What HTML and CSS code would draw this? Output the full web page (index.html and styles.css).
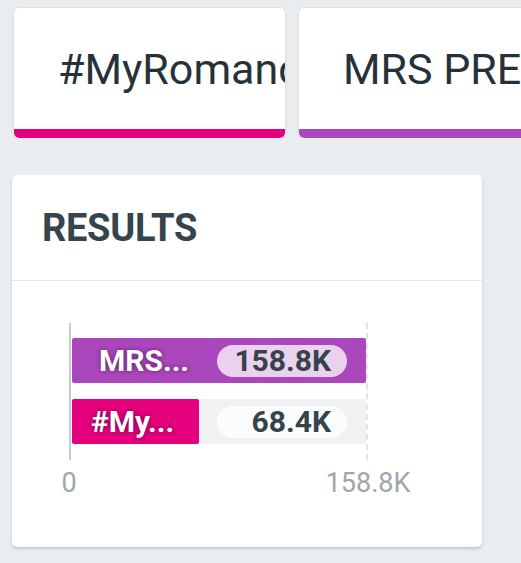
FILE: index.html
```html
<!DOCTYPE html>
<html lang="en">
<head>
<meta charset="utf-8">
<title>Results</title>
<link rel="stylesheet" href="styles.css">
</head>
<body>
  <div class="tabs">
    <div class="tab tab--pink">
      <div class="tab-label">#MyRomance</div>
      <div class="tab-bar"></div>
    </div>
    <div class="tab tab--purple">
      <div class="tab-label">MRS PRESIDENT</div>
      <div class="tab-bar"></div>
    </div>
  </div>

  <section class="results">
    <header class="results-head">
      <h2 class="results-title">RESULTS</h2>
    </header>
    <div class="chart">
      <div class="plot">
        <div class="bar-row">
          <div class="fill fill--purple" style="width:100%"></div>
          <div class="bar-content">
            <span class="bar-label bar-label--wide">MRS...</span>
            <span class="pill">158.8K</span>
          </div>
        </div>
        <div class="bar-row">
          <div class="fill fill--pink" style="width:43.07%"></div>
          <div class="bar-content">
            <span class="bar-label bar-label--narrow">#My...</span>
            <span class="pill">68.4K</span>
          </div>
        </div>
      </div>
      <div class="ticks">
        <span class="tick">0</span>
        <span class="tick">158.8K</span>
      </div>
    </div>
  </section>
</body>
</html>
```

FILE: styles.css
```css
* {
  box-sizing: border-box;
}

html, body {
  margin: 0;
  padding: 0;
}

body {
  width: 521px;
  height: 563px;
  overflow: hidden;
  background: #e9edf0;
  font-family: Roboto, "Liberation Sans", sans-serif;
}

.tabs {
  display: flex;
  gap: 14px;
  padding: 8px 0 0 14px;
  overflow: hidden;
}

.tab {
  flex: 0 0 271px;
  height: 130px;
  display: flex;
  flex-direction: column;
  background: #ffffff;
  border-radius: 5px;
  overflow: hidden;
  box-shadow: 0 0 0 1px #dde1e4, 0 2px 3px rgba(0, 0, 0, 0.12);
}

.tab-label {
  flex: 1;
  display: flex;
  align-items: center;
  padding-left: 44px;
  font-size: 43px;
  color: #263238;
  white-space: nowrap;
  overflow: hidden;
}

.tab-bar {
  height: 9px;
  border-radius: 0 0 5px 5px;
}

.tab--pink .tab-bar {
  background: #e5007d;
}

.tab--purple .tab-bar {
  background: #ab47bc;
}

.results {
  margin: 37px 0 0 12px;
  width: 470px;
  height: 372px;
  background: #ffffff;
  border-radius: 5px;
  box-shadow: 0 2px 3px rgba(0, 0, 0, 0.16);
}

.results-head {
  height: 106px;
  display: flex;
  align-items: center;
  padding-left: 30px;
  border-bottom: 1px solid #e5e8eb;
}

.results-title {
  margin: 0;
  font-size: 38px;
  font-weight: 700;
  letter-spacing: -0.3px;
  color: #36454d;
}

.chart {
  padding: 42px 0 0 57px;
}

.plot {
  width: 299px;
  display: flex;
  flex-direction: column;
  gap: 16px;
  padding: 15px 0 16px 1px;
  border-left: 2px solid #c6cbce;
  border-right: 2px dashed #e1e4e6;
}

.bar-row {
  display: grid;
  height: 45px;
  background: #f0f1f3;
  border-radius: 2px;
}

.fill,
.bar-content {
  grid-area: 1 / 1;
}

.fill {
  border-radius: 2px;
}

.fill--purple {
  background: #ab47bc;
}

.fill--pink {
  background: #e5007d;
}

.bar-content {
  display: flex;
  align-items: center;
  justify-content: space-between;
  padding-right: 19px;
}

.bar-label {
  font-size: 30px;
  font-weight: 700;
  color: #ffffff;
  line-height: 1;
  text-shadow: 0 0 5px rgba(40, 0, 40, 0.6);
}

.bar-label--wide {
  padding-left: 27px;
}

.bar-label--narrow {
  padding-left: 19px;
}

.pill {
  width: 130px;
  height: 32px;
  border-radius: 16px;
  background: rgba(255, 255, 255, 0.75);
  padding-right: 16px;
  text-align: right;
  font-size: 30px;
  font-weight: 700;
  line-height: 32px;
  color: #37434a;
}

.ticks {
  width: 299px;
  display: flex;
  justify-content: space-between;
  margin-top: 7px;
}

.tick {
  width: 0;
  display: flex;
  justify-content: center;
  white-space: nowrap;
  font-size: 27px;
  line-height: 32px;
  color: #9ea6aa;
}
```
